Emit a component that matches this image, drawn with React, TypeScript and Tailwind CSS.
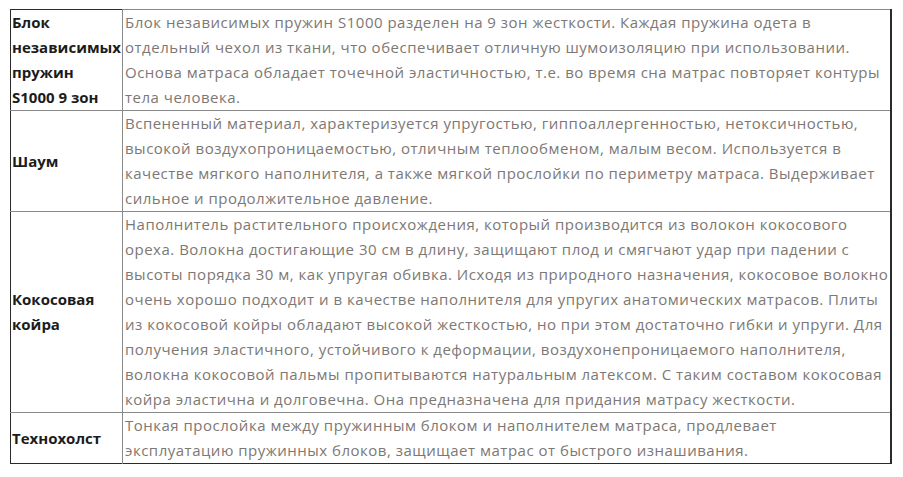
const rows = [
  {
    label: ["Блок", "независимых", "пружин", "S1000 9 зон"],
    text: [
      "Блок независимых пружин S1000 разделен на 9 зон жесткости. Каждая пружина одета в",
      "отдельный чехол из ткани, что обеспечивает отличную шумоизоляцию при использовании.",
      "Основа матраса обладает точечной эластичностью, т.е. во время сна матрас повторяет контуры",
      "тела человека.",
    ],
  },
  {
    label: ["Шаум"],
    text: [
      "Вспененный материал, характеризуется упругостью, гиппоаллергенностью, нетоксичностью,",
      "высокой воздухопроницаемостью, отличным теплообменом, малым весом. Используется в",
      "качестве мягкого наполнителя, а также мягкой прослойки по периметру матраса. Выдерживает",
      "сильное и продолжительное давление.",
    ],
  },
  {
    label: ["Кокосовая", "койра"],
    text: [
      "Наполнитель растительного происхождения, который производится из волокон кокосового",
      "ореха. Волокна достигающие 30 см в длину, защищают плод и смягчают удар при падении с",
      "высоты порядка 30 м, как упругая обивка. Исходя из природного назначения, кокосовое волокно",
      "очень хорошо подходит и в качестве наполнителя для упругих анатомических матрасов. Плиты",
      "из кокосовой койры обладают высокой жесткостью, но при этом достаточно гибки и упруги. Для",
      "получения эластичного, устойчивого к деформации, воздухонепроницаемого наполнителя,",
      "волокна кокосовой пальмы пропитываются натуральным латексом. С таким составом кокосовая",
      "койра эластична и долговечна. Она предназначена для придания матрасу жесткости.",
    ],
  },
  {
    label: ["Технохолст"],
    text: [
      "Тонкая прослойка между пружинным блоком и наполнителем матраса, продлевает",
      "эксплуатацию пружинных блоков, защищает матрас от быстрого изнашивания.",
    ],
  },
]

export default function App() {
  return (
    <main className="min-h-screen bg-white pt-[9px] pl-[10px] font-['Open_Sans',sans-serif] text-[15px] leading-[25px]">
      <table className="w-[882px] table-fixed border-collapse border-l border-b border-r-2 border-[#2b2b2b]">
        <colgroup>
          <col className="w-[112px]" />
          <col />
        </colgroup>
        <tbody>
          {rows.map((row, i) => (
            <tr key={i}>
              <td
                className={`align-middle px-[1px] font-bold text-[#1c1c1c] border-r border-[#8a8a8a] ${
                  i === 0 ? "border-t border-t-[#2b2b2b]" : "border-t border-t-[#8a8a8a]"
                }`}
              >
                {row.label.map((l, j) => (
                  <div key={j} className="whitespace-nowrap">
                    {l}
                  </div>
                ))}
              </td>
              <td className="align-top px-[2px] tracking-[0.5px] text-[#7d7874] border-t border-[#8a8a8a]">
                {row.text.map((t, j) => (
                  <div key={j} className="whitespace-nowrap">
                    {t}
                  </div>
                ))}
              </td>
            </tr>
          ))}
        </tbody>
      </table>
    </main>
  )
}
